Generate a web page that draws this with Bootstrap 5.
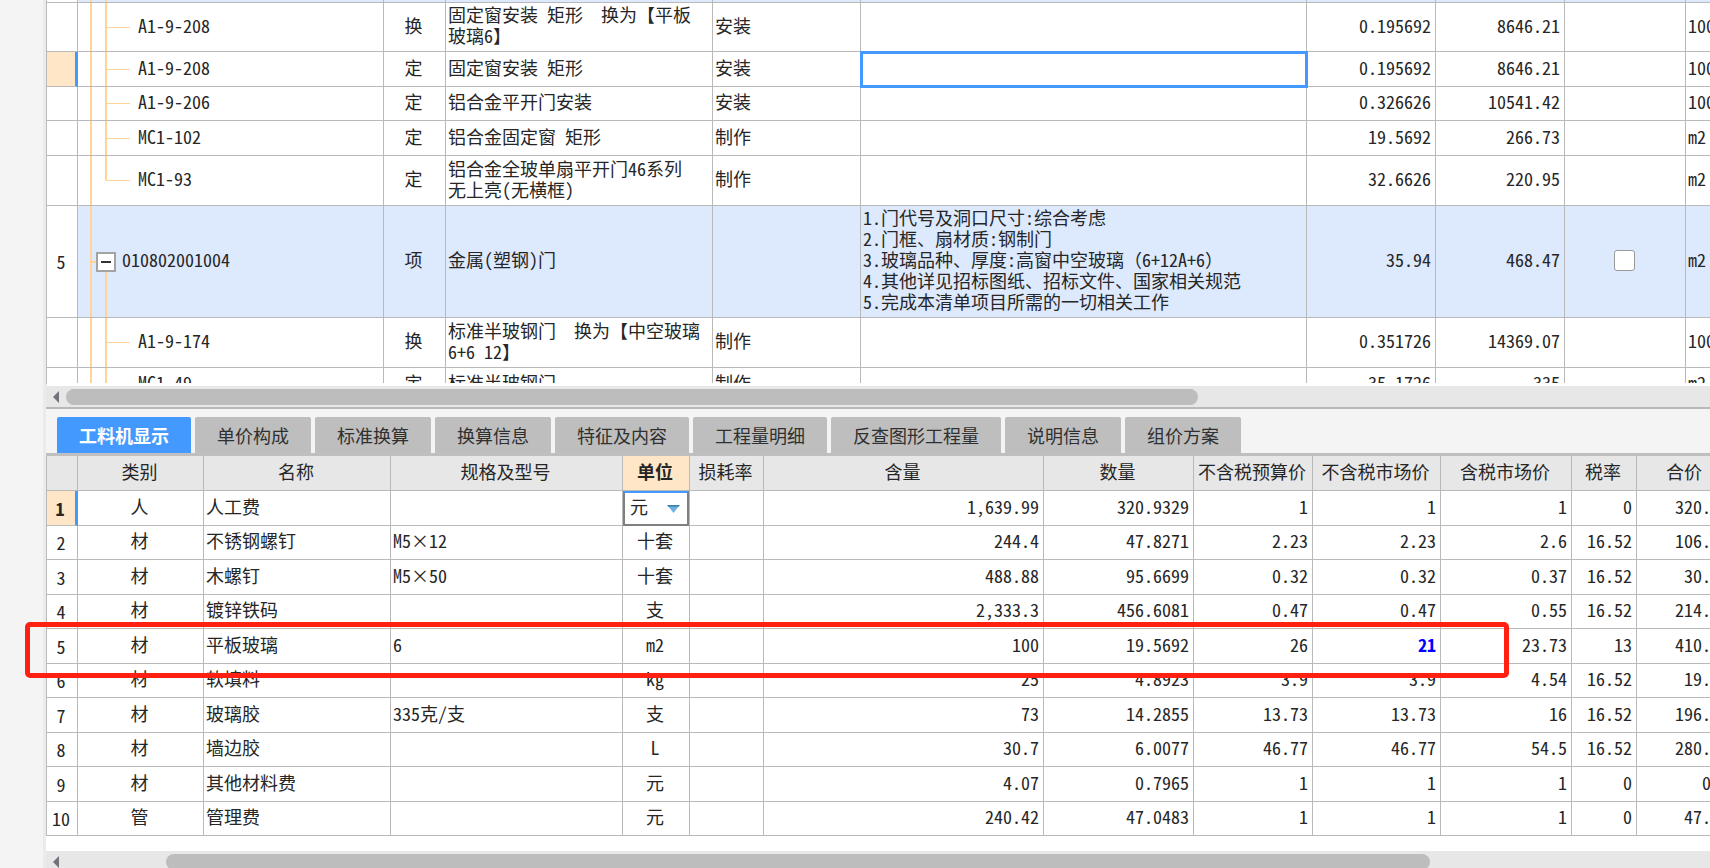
<!DOCTYPE html>
<html lang="zh-CN">
<head>
<meta charset="utf-8">
<meta name="viewport" content="width=device-width, initial-scale=1">
<title>工料机显示</title>
<link href="https://cdn.jsdelivr.net/npm/bootstrap@5.3.0/dist/css/bootstrap.min.css" rel="stylesheet">
<style>
  :root { --line: #b9b9b9; --pick: #4499ff; --warm: #ffe6c7; --tree: #ffd495; }
  body {
    font-family: "Noto Sans Mono CJK SC", "Noto Sans CJK SC", "Liberation Mono", monospace;
    font-size: 18px; line-height: 21px; color: #262626; background: #f4f4f4;
  }
  .gutter { width: 46px; border-right: 3px solid #ebebeb; }
  .upper { flex: 1 1 0; min-height: 0; border-bottom: 3px solid #fff; }
  .sheet { border-left: 1px solid var(--line); background: #fff; }

  .grid { table-layout: fixed; width: calc(100% + 24px); max-width: none; border-collapse: separate; border-spacing: 0; color: inherit; }
  .grid > :not(caption) > * > * {
    padding: 0 4px 4px 2px; border: solid var(--line); border-width: 0 1px 1px 0;
    vertical-align: middle; white-space: nowrap; overflow: hidden; box-shadow: none; color: inherit; background-color: transparent;
  }
  .grid tr > .mid { text-align: center; padding: 0 2px 4px 0; }
  .grid tr > .mid:first-child { padding: 0 2px 0 0; }
  .grid tr > .num { text-align: right; }
  .grid thead th { font-weight: 400; background-color: #e7e7e7; height: 35px; }
  .grid tr > .hot { background-color: var(--warm); font-weight: 700; }
  .grid tr > .hot-row { border-right: 3px solid var(--pick); }
  .grid .group > td { background-color: #dde9fd; }
  .grid .edited { color: #0000ff; font-weight: 700; }
  .short > * { height: 34px; }
  .tall > * { height: 35px; }
  .two > * { height: 49px; }
  .two-b > * { height: 50px; }
  .five > * { height: 112px; }
  .grid > tbody > .sliver > * { height: 3px; line-height: 1px; padding: 0; }

  /* tree guides: outer rail, inner rail, branch */
  .grid .tree {
    padding-left: 60px; background-repeat: no-repeat;
    background-image: linear-gradient(var(--tree), var(--tree)), linear-gradient(var(--tree), var(--tree)), linear-gradient(var(--tree), var(--tree));
    background-size: 2px 100%, 2px 100%, 24px 1px;
    background-position: 12px 0, 27px 0, 28px 50%;
  }
  .grid .tree.tail { background-size: 2px 100%, 2px 50%, 24px 1px; }
  .grid .tree.root { padding: 0 0 0 18px; background-size: 2px 100%, 2px 50%, 6px 2px; background-position: 12px 0, 27px 100%, 12px 50%; }
  .root span { padding-bottom: 4px; }
  .root .d-flex { gap: 6px; }
  .grid .tree.rails { background-size: 2px 100%, 2px 100%, 0 0; }
  .fold { width: 20px; height: 20px; border: 2px solid #a3a3a3; background: #fff; }
  .grid .cursor-cell { position: relative; outline: 3px solid var(--pick); outline-offset: -2px; }
  .tick { width: 21px; height: 21px; appearance: none; background: #fff; border: 1px solid #999; border-radius: 3px; }

  .scroller { height: 21px; background: #e7e7e7; padding-top: 3px; }
  .scroller.last { height: 17px; }
  .scroller button { width: 20px; height: 16px; }
  .thumb { height: 16px; border-radius: 8px; background: #bdbdbd; }
  .thumb-a { width: 68%; }
  .thumb-b { width: 76%; margin-left: 6%; }

  .tabbar { border-top: 2px solid var(--line); border-bottom: 3px solid #bfbfbf; padding: 8px 11px 0; gap: 4px; }
  .tabbar button {
    height: 36px; padding: 0 22px; border: 0; border-radius: 2px 2px 0 0; background: #bebebe; color: #303030;
    font-family: "Noto Sans CJK SC", sans-serif; white-space: nowrap;
  }
  .tabbar button.on { background: var(--pick); color: #fff; font-weight: 700; }

  .grid tr > .picker { position: relative; border-bottom: 0; padding: 0; }
  .picker select { width: 100%; height: 35px; padding: 0 0 4px 5px; appearance: none; background: #fff; color: inherit; border: 2px solid #808080; border-top-color: var(--pick); border-radius: 0; display: block; }
  .picker svg { position: absolute; right: 9px; top: 14px; pointer-events: none; }
  .foot { height: 15px; }
  .marker { position: absolute; left: -21px; right: 201px; top: 166px; height: 56px; border: 5px solid #ff2012; border-radius: 5px; pointer-events: none; }
</style>
</head>
<body>
<div class="d-flex vh-100 overflow-hidden">
  <aside class="gutter flex-shrink-0"></aside>
  <main class="d-flex flex-column flex-grow-1" style="min-width:0">

    <section class="upper sheet overflow-hidden">
      <table class="table grid mb-0">
        <colgroup><col width="31"><col width="306"><col width="62"><col width="267"><col width="148"><col><col width="129"><col width="129"><col width="121"><col width="48"></colgroup>
        <tbody>
          <tr class="sliver group"><td class="bg-white"></td><td class="tree rails"></td><td></td><td></td><td></td><td></td><td></td><td></td><td></td><td></td></tr>
          <tr class="two"><td></td><td class="tree">A1-9-208</td><td class="mid">换</td><td>固定窗安装 矩形　换为【平板<br>玻璃6】</td><td>安装</td><td></td><td class="num">0.195692</td><td class="num">8646.21</td><td></td><td>100m2</td></tr>
          <tr class="tall"><td class="hot hot-row"></td><td class="tree">A1-9-208</td><td class="mid">定</td><td>固定窗安装 矩形</td><td>安装</td><td class="cursor-cell"></td><td class="num">0.195692</td><td class="num">8646.21</td><td></td><td>100m2</td></tr>
          <tr class="short"><td></td><td class="tree">A1-9-206</td><td class="mid">定</td><td>铝合金平开门安装</td><td>安装</td><td></td><td class="num">0.326626</td><td class="num">10541.42</td><td></td><td>100m2</td></tr>
          <tr class="tall"><td></td><td class="tree">MC1-102</td><td class="mid">定</td><td>铝合金固定窗 矩形</td><td>制作</td><td></td><td class="num">19.5692</td><td class="num">266.73</td><td></td><td>m2</td></tr>
          <tr class="two-b"><td></td><td class="tree tail">MC1-93</td><td class="mid">定</td><td>铝合金全玻单扇平开门46系列<br>无上亮(无横框)</td><td>制作</td><td></td><td class="num">32.6626</td><td class="num">220.95</td><td></td><td>m2</td></tr>
          <tr class="five group"><td class="mid bg-white">5</td>
            <td class="tree root"><div class="d-flex align-items-center"><button type="button" class="fold p-0 d-flex align-items-center justify-content-center" aria-label="折叠"><svg width="12" height="12" viewBox="0 0 12 12"><path d="M1 6h10" stroke="#333" stroke-width="2"/></svg></button><span>010802001004</span></div></td>
            <td class="mid">项</td><td>金属(塑钢)门</td><td></td>
            <td>1.门代号及洞口尺寸:综合考虑<br>2.门框、扇材质:钢制门<br>3.玻璃品种、厚度:高窗中空玻璃（6+12A+6）<br>4.其他详见招标图纸、招标文件、国家相关规范<br>5.完成本清单项目所需的一切相关工作</td>
            <td class="num">35.94</td><td class="num">468.47</td><td class="mid"><input type="checkbox" class="tick align-middle" aria-label="主要清单"></td><td>m2</td></tr>
          <tr class="two-b"><td></td><td class="tree">A1-9-174</td><td class="mid">换</td><td>标准半玻钢门　换为【中空玻璃<br>6+6 12】</td><td>制作</td><td></td><td class="num">0.351726</td><td class="num">14369.07</td><td></td><td>100m2</td></tr>
          <tr class="short"><td></td><td class="tree rails">MC1-49</td><td class="mid">定</td><td>标准半玻钢门</td><td>制作</td><td></td><td class="num">35.1726</td><td class="num">335</td><td></td><td>m2</td></tr>
        </tbody>
      </table>
    </section>

    <div class="scroller d-flex flex-shrink-0">
      <button type="button" class="btn p-0 border-0 d-flex align-items-center justify-content-center" aria-label="向左滚动"><svg width="8" height="12" viewBox="0 0 8 12"><path d="M7 0v12L1 6z" fill="#70737c"/></svg></button>
      <div class="thumb thumb-a"></div>
    </div>

    <nav class="tabbar d-flex flex-shrink-0">
      <button type="button" class="on">工料机显示</button><button type="button">单价构成</button><button type="button">标准换算</button><button type="button">换算信息</button><button type="button">特征及内容</button><button type="button">工程量明细</button><button type="button">反查图形工程量</button><button type="button">说明信息</button><button type="button">组价方案</button>
    </nav>

    <section class="position-relative flex-shrink-0">
      <div class="sheet overflow-hidden">
        <table class="table grid mb-0">
          <colgroup><col width="31"><col width="126"><col width="187"><col width="232"><col width="67"><col width="74"><col><col width="150"><col width="119"><col width="128"><col width="131"><col width="65"><col width="97"></colgroup>
          <thead>
            <tr><th></th><th class="mid">类别</th><th class="mid">名称</th><th class="mid">规格及型号</th><th class="mid hot">单位</th><th class="mid">损耗率</th><th class="mid">含量</th><th class="mid">数量</th><th class="mid">不含税预算价</th><th class="mid">不含税市场价</th><th class="mid">含税市场价</th><th class="mid">税率</th><th class="mid">合价</th></tr>
          </thead>
          <tbody>
            <tr class="tall"><td class="mid hot hot-row">1</td><td class="mid">人</td><td>人工费</td><td></td><td class="mid picker"><select aria-label="单位"><option>元</option></select><svg width="13" height="8" viewBox="0 0 14 9"><path d="M0 0h14L7 9z" fill="#6fb1dc"/><path d="M0 0h14l-1 2H1z" fill="#3f84b0"/></svg></td><td></td><td class="num">1,639.99</td><td class="num">320.9329</td><td class="num">1</td><td class="num">1</td><td class="num">1</td><td class="num">0</td><td class="num">320.93</td></tr>
            <tr class="short"><td class="mid">2</td><td class="mid">材</td><td>不锈钢螺钉</td><td>M5×12</td><td class="mid">十套</td><td></td><td class="num">244.4</td><td class="num">47.8271</td><td class="num">2.23</td><td class="num">2.23</td><td class="num">2.6</td><td class="num">16.52</td><td class="num">106.65</td></tr>
            <tr class="tall"><td class="mid">3</td><td class="mid">材</td><td>木螺钉</td><td>M5×50</td><td class="mid">十套</td><td></td><td class="num">488.88</td><td class="num">95.6699</td><td class="num">0.32</td><td class="num">0.32</td><td class="num">0.37</td><td class="num">16.52</td><td class="num">30.61</td></tr>
            <tr class="short"><td class="mid">4</td><td class="mid">材</td><td>镀锌铁码</td><td></td><td class="mid">支</td><td></td><td class="num">2,333.3</td><td class="num">456.6081</td><td class="num">0.47</td><td class="num">0.47</td><td class="num">0.55</td><td class="num">16.52</td><td class="num">214.61</td></tr>
            <tr class="tall"><td class="mid">5</td><td class="mid">材</td><td>平板玻璃</td><td>6</td><td class="mid">m2</td><td></td><td class="num">100</td><td class="num">19.5692</td><td class="num">26</td><td class="num edited">21</td><td class="num">23.73</td><td class="num">13</td><td class="num">410.95</td></tr>
            <tr class="short"><td class="mid">6</td><td class="mid">材</td><td>软填料</td><td></td><td class="mid">kg</td><td></td><td class="num">25</td><td class="num">4.8923</td><td class="num">3.9</td><td class="num">3.9</td><td class="num">4.54</td><td class="num">16.52</td><td class="num">19.08</td></tr>
            <tr class="tall"><td class="mid">7</td><td class="mid">材</td><td>玻璃胶</td><td>335克/支</td><td class="mid">支</td><td></td><td class="num">73</td><td class="num">14.2855</td><td class="num">13.73</td><td class="num">13.73</td><td class="num">16</td><td class="num">16.52</td><td class="num">196.14</td></tr>
            <tr class="short"><td class="mid">8</td><td class="mid">材</td><td>墙边胶</td><td></td><td class="mid">L</td><td></td><td class="num">30.7</td><td class="num">6.0077</td><td class="num">46.77</td><td class="num">46.77</td><td class="num">54.5</td><td class="num">16.52</td><td class="num">280.98</td></tr>
            <tr class="tall"><td class="mid">9</td><td class="mid">材</td><td>其他材料费</td><td></td><td class="mid">元</td><td></td><td class="num">4.07</td><td class="num">0.7965</td><td class="num">1</td><td class="num">1</td><td class="num">1</td><td class="num">0</td><td class="num">0.8</td></tr>
            <tr class="short"><td class="mid">10</td><td class="mid">管</td><td>管理费</td><td></td><td class="mid">元</td><td></td><td class="num">240.42</td><td class="num">47.0483</td><td class="num">1</td><td class="num">1</td><td class="num">1</td><td class="num">0</td><td class="num">47.05</td></tr>
          </tbody>
        </table>
      </div>
      <div class="marker"></div>
    </section>

    <div class="foot bg-white flex-shrink-0"></div>
    <div class="scroller last d-flex flex-shrink-0 overflow-hidden">
      <button type="button" class="btn p-0 border-0 d-flex align-items-center justify-content-center" aria-label="向左滚动"><svg width="8" height="12" viewBox="0 0 8 12"><path d="M7 0v12L1 6z" fill="#70737c"/></svg></button>
      <div class="thumb thumb-b"></div>
    </div>
  </main>
</div>
<script src="https://cdn.jsdelivr.net/npm/bootstrap@5.3.0/dist/js/bootstrap.bundle.min.js"></script>
</body>
</html>
